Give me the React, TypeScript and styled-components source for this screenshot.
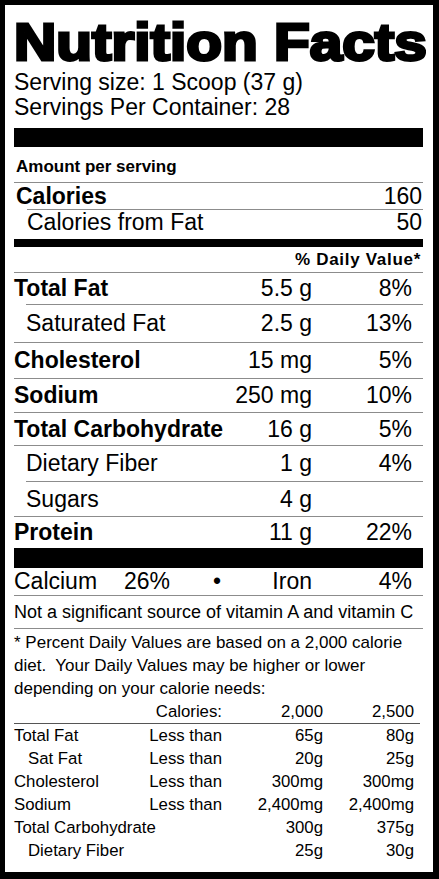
import React from "react";
import styled, { createGlobalStyle } from "styled-components";

interface NutrientType {
  label: string;
  amount?: string;
  percent?: string;
  bold?: boolean;
  indent?: boolean;
  lineIndent?: boolean;
  height: number;
}

interface DailyType {
  label: string;
  limit?: string;
  low: string;
  high: string;
  indent?: boolean;
}

const NUTRIENTS: NutrientType[] = [
  { label: "Total Fat", amount: "5.5 g", percent: "8%", bold: true, height: 31 },
  { label: "Saturated Fat", amount: "2.5 g", percent: "13%", indent: true, lineIndent: true, height: 37 },
  { label: "Cholesterol", amount: "15 mg", percent: "5%", bold: true, height: 35 },
  { label: "Sodium", amount: "250 mg", percent: "10%", bold: true, height: 33 },
  { label: "Total Carbohydrate", amount: "16 g", percent: "5%", bold: true, height: 32 },
  { label: "Dietary Fiber", amount: "1 g", percent: "4%", indent: true, height: 35 },
  { label: "Sugars", amount: "4 g", indent: true, lineIndent: true, height: 34 },
  { label: "Protein", amount: "11 g", percent: "22%", bold: true, height: 31 },
];

const DAILY_ROWS: DailyType[] = [
  { label: "Total Fat", limit: "Less than", low: "65g", high: "80g" },
  { label: "Sat Fat", limit: "Less than", low: "20g", high: "25g", indent: true },
  { label: "Cholesterol", limit: "Less than", low: "300mg", high: "300mg" },
  { label: "Sodium", limit: "Less than", low: "2,400mg", high: "2,400mg" },
  { label: "Total Carbohydrate", low: "300g", high: "375g" },
  { label: "Dietary Fiber", low: "25g", high: "30g", indent: true },
];

const App: React.FC = () => {
  return (
    <>
      <GlobalStyle />
      <Label>
        <Title>Nutrition Facts</Title>
        <Serving>
          Serving size: 1 Scoop (37 g)
          <br />
          Servings Per Container: 28
        </Serving>
        <Bar $h={19} $top={8} />
        <AmountHead>Amount per serving</AmountHead>
        <CalorieRow $h={26}>
          <RowLabel $bold>Calories</RowLabel>
          <span>160</span>
        </CalorieRow>
        <CalorieRow $h={24} $indent>
          <RowLabel>Calories from Fat</RowLabel>
          <span>50</span>
        </CalorieRow>
        <Bar $h={8} $top={5} />
        <DailyHead>% Daily Value*</DailyHead>
        {NUTRIENTS.map((item) => (
          <NutrientRow
            key={item.label}
            $h={item.height}
            $indent={item.indent}
            $lineIndent={item.lineIndent}
          >
            <RowLabel $bold={item.bold}>{item.label}</RowLabel>
            <Amount>{item.amount}</Amount>
            <Amount>{item.percent}</Amount>
          </NutrientRow>
        ))}
        <Bar $h={20} />
        <MineralRow>
          <span>Calcium</span>
          <span>26%</span>
          <Dot>•</Dot>
          <MineralRight>Iron</MineralRight>
          <MineralRight>4%</MineralRight>
        </MineralRow>
        <NoteRow>Not a significant source of vitamin A and vitamin C</NoteRow>
        <Footnote>
          * Percent Daily Values are based on a 2,000 calorie diet.&nbsp; Your
          Daily Values may be higher or lower depending on your calorie needs:
        </Footnote>
        <DailyTable>
          <TableHead>
            <span />
            <Cell>Calories:</Cell>
            <Cell>2,000</Cell>
            <Cell>2,500</Cell>
          </TableHead>
          {DAILY_ROWS.map((row) => (
            <TableRow key={row.label}>
              <TableLabel $indent={row.indent} $wide={!row.limit}>
                {row.label}
              </TableLabel>
              {row.limit && <Cell>{row.limit}</Cell>}
              <Cell>{row.low}</Cell>
              <Cell>{row.high}</Cell>
            </TableRow>
          ))}
        </DailyTable>
      </Label>
    </>
  );
};

const GlobalStyle = createGlobalStyle`
  html, body {
    margin: 0;
    padding: 0;
    background: #fff;
  }
  body {
    font-family: "Liberation Sans", Arial, Helvetica, sans-serif;
    color: #000;
  }
`;

const Label = styled.div`
  box-sizing: border-box;
  width: 439px;
  height: 879px;
  display: flex;
  flex-direction: column;
  padding: 10px 10px 0 9px;
  border-style: solid;
  border-color: #000;
  border-width: 5px 6px 7px 5px;
  background: #fff;
  overflow: hidden;
`;

const Title = styled.div`
  padding-top: 1px;
  margin-bottom: -1px;
  font-size: 52px;
  font-weight: 700;
  line-height: 52px;
  white-space: nowrap;
  transform: scaleX(1.125);
  transform-origin: left center;
  -webkit-text-stroke: 3px #000;
`;

const Serving = styled.div`
  margin-top: 3px;
  font-size: 23px;
  line-height: 25px;
`;

const Bar = styled.div<{ $h: number; $top?: number }>`
  height: ${(p) => p.$h}px;
  margin-top: ${(p) => p.$top ?? 0}px;
  background: #000;
`;

const AmountHead = styled.div`
  padding: 10px 0 5px 2px;
  font-size: 17px;
  font-weight: 700;
  line-height: 20px;
`;

const CalorieRow = styled.div<{ $h: number; $indent?: boolean }>`
  display: flex;
  align-items: center;
  height: ${(p) => p.$h}px;
  margin-left: ${(p) => (p.$indent ? 13 : 0)}px;
  padding-left: ${(p) => (p.$indent ? 0 : 2)}px;
  padding-right: 1px;
  border-top: 1px solid #8c8c8c;
  font-size: 23px;
  line-height: 23px;
`;

const DailyHead = styled.div`
  height: 25px;
  padding-right: 2px;
  text-align: right;
  font-size: 17px;
  font-weight: 700;
  letter-spacing: 0.7px;
  line-height: 25px;
`;

const NutrientRow = styled.div<{
  $h: number;
  $indent?: boolean;
  $lineIndent?: boolean;
}>`
  display: flex;
  align-items: center;
  height: ${(p) => p.$h}px;
  margin-left: ${(p) => (p.$lineIndent ? 12 : 0)}px;
  padding-left: ${(p) => (p.$indent && !p.$lineIndent ? 12 : 0)}px;
  padding-right: 11px;
  border-top: 1px solid #8c8c8c;
  font-size: 23px;
  line-height: 23px;
`;

const RowLabel = styled.span<{ $bold?: boolean }>`
  flex: 1;
  min-width: 0;
  white-space: nowrap;
  font-weight: ${(p) => (p.$bold ? 700 : 400)};
`;

const Amount = styled.span`
  width: 100px;
  text-align: right;
  white-space: nowrap;
`;

const MineralRow = styled.div`
  display: grid;
  grid-template-columns: 110px 70px 46px 1fr 100px;
  align-items: center;
  height: 27px;
  padding-right: 11px;
  font-size: 23px;
  line-height: 23px;
`;

const Dot = styled.span`
  text-align: center;
`;

const MineralRight = styled.span`
  text-align: right;
`;

const NoteRow = styled.div`
  height: 32px;
  border-top: 1px solid #8c8c8c;
  font-size: 18px;
  line-height: 32px;
  white-space: nowrap;
`;

const Footnote = styled.div`
  padding-top: 2px;
  border-top: 1px solid #8c8c8c;
  font-size: 17px;
  line-height: 23px;
`;

const DailyTable = styled.div`
  display: flex;
  flex-direction: column;
  font-size: 16.8px;
  line-height: 23px;
`;

const TableHead = styled.div`
  display: grid;
  grid-template-columns: 130px 78px 101px 91px;
  margin-right: 3px;
  border-bottom: 1px solid #555;
`;

const TableRow = styled.div`
  display: grid;
  grid-template-columns: 130px 78px 101px 91px;
`;

const Cell = styled.span`
  text-align: right;
  white-space: nowrap;
`;

const TableLabel = styled.span<{ $indent?: boolean; $wide?: boolean }>`
  grid-column: ${(p) => (p.$wide ? "span 2" : "span 1")};
  padding-left: ${(p) => (p.$indent ? 14 : 0)}px;
  white-space: nowrap;
`;

export default App;
